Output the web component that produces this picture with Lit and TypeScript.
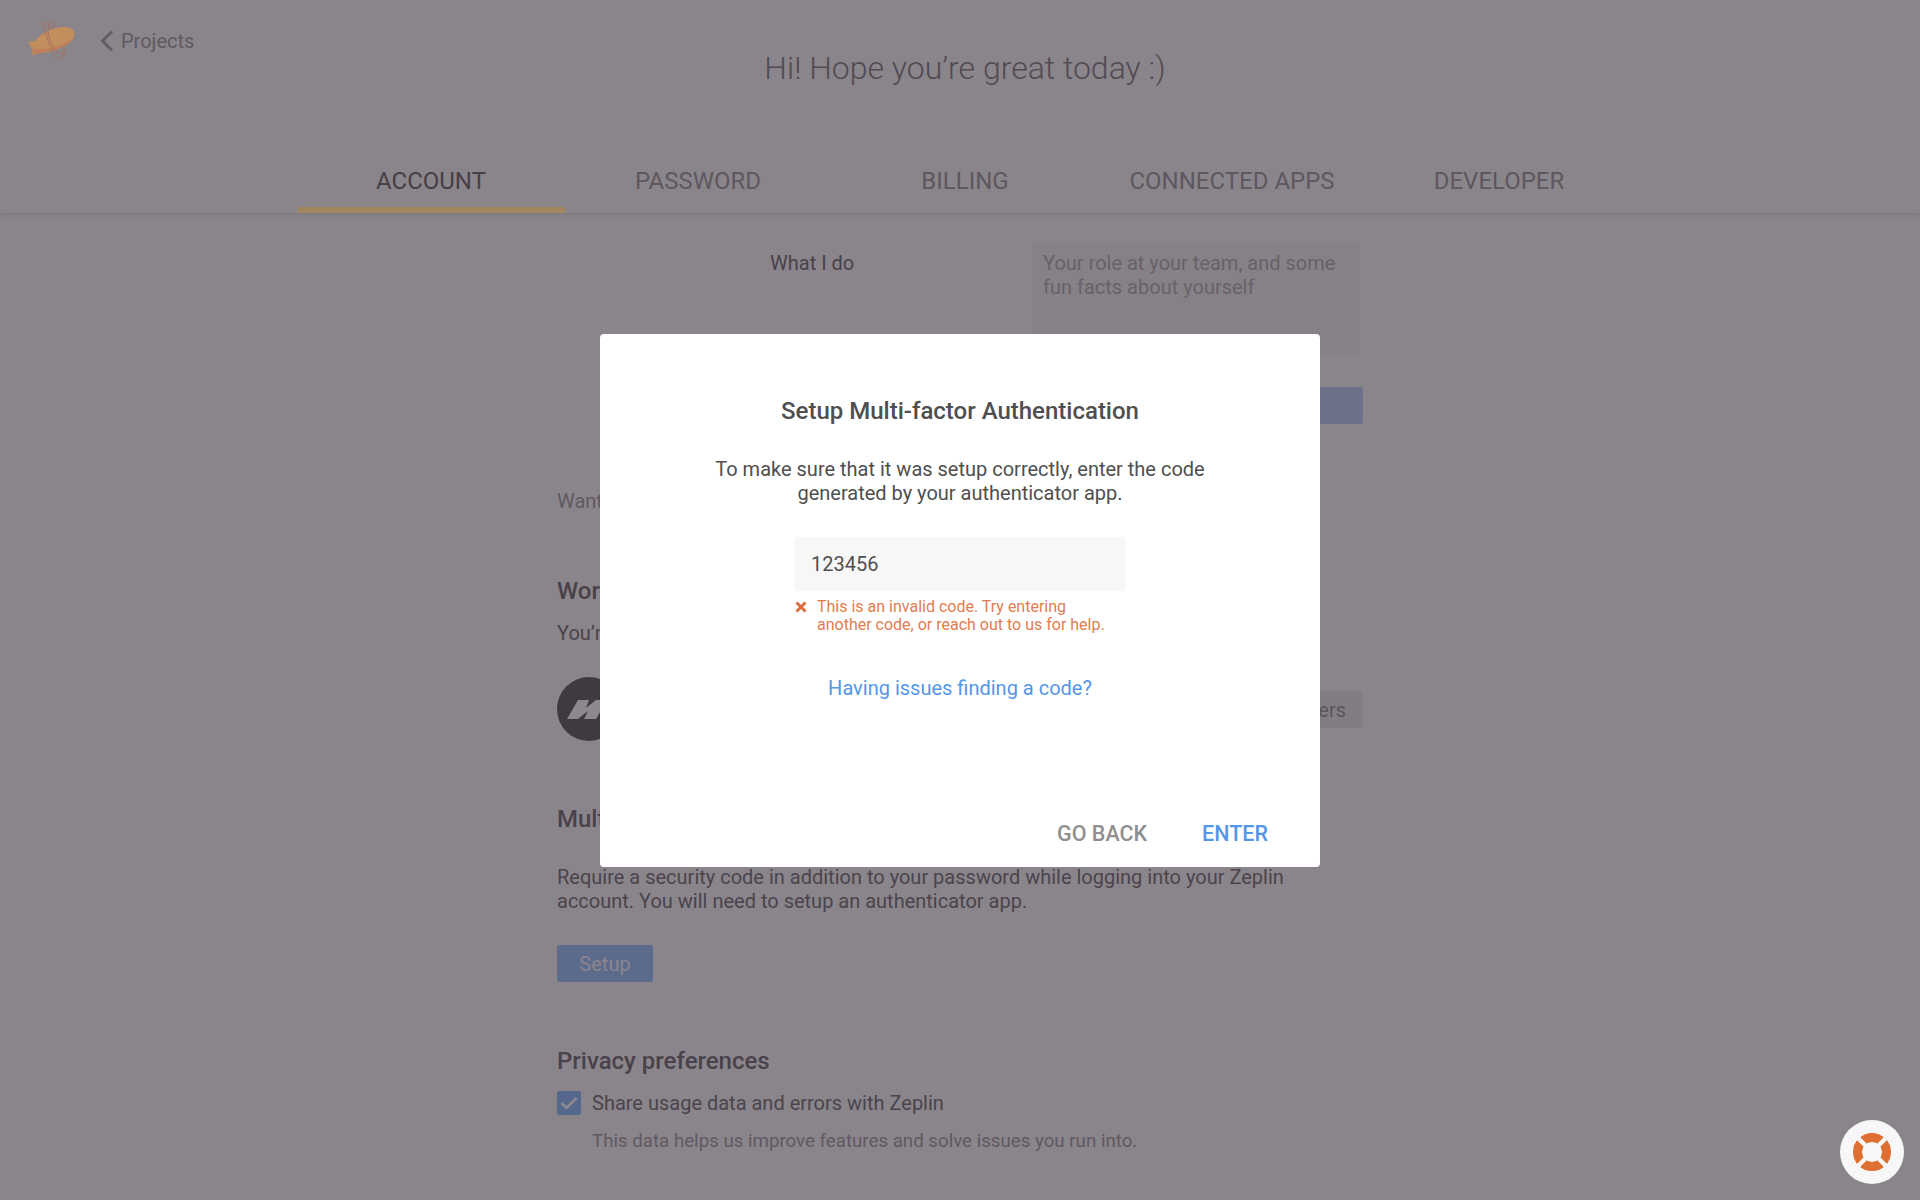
import { LitElement, html, css } from 'lit';
import { customElement } from 'lit/decorators.js';

const TABS = ['ACCOUNT', 'PASSWORD', 'BILLING', 'CONNECTED APPS', 'DEVELOPER'];

@customElement('app-root')
export class AppRoot extends LitElement {
  static styles = css`
    :host {
      display: block;
      height: 1200px;
      overflow: hidden;
      background: #f9f9f9;
      color: #7a767a;
      font-family: Roboto, 'Liberation Sans', sans-serif;
      font-size: 20px;
      line-height: 24px;
    }
    .header {
      height: 213px;
      box-shadow: 0 2px 6px rgba(0, 0, 0, 0.1);
      display: flex;
      flex-direction: column;
      justify-content: space-between;
      padding-left: 10px;
    }
    .top {
      display: grid;
      grid-template-columns: 1fr auto 1fr;
      align-items: start;
    }
    .nav {
      display: flex;
      align-items: center;
      padding: 22px 0 0 17px;
      color: #a5a1a5;
      font-size: 20px;
    }
    .logo {
      position: relative;
      z-index: 1;
      width: 49px;
      height: 40px;
      margin: -3px 24px 0 0;
    }
    .chev {
      width: 14px;
      height: 22px;
      margin-right: 7px;
    }
    .title {
      margin: 48px 0 0;
      font-size: 32px;
      font-weight: 300;
      line-height: 40px;
      color: #888488;
    }
    .tabs {
      display: flex;
      justify-content: center;
    }
    .tab {
      position: relative;
      width: 267px;
      height: 57px;
      box-sizing: border-box;
      padding-top: 12px;
      text-align: center;
      font-size: 24px;
      line-height: 26px;
      color: #a09ca0;
    }
    .tab.on {
      color: #706c70;
    }
    /* sits above the overlay, the dimmed gold can't be reached through it */
    .tab.on::after {
      content: '';
      position: absolute;
      left: 0;
      right: 0;
      bottom: 0;
      height: 6px;
      z-index: 1;
      background: #a0875f;
    }
    .main {
      width: 806px;
      margin: 0 auto;
      display: flex;
      flex-direction: column;
    }
    .what {
      display: flex;
      margin-top: 30px;
      padding-left: 213px;
    }
    .what label {
      width: 262px;
      padding-top: 8px;
      color: #767276;
    }
    .area {
      width: 328px;
      height: 112px;
      box-sizing: border-box;
      padding: 8px 11px;
      background: #f1f1f1;
      color: #b4b0b4;
    }
    .end {
      display: flex;
      justify-content: flex-end;
    }
    .btn {
      height: 37px;
      box-sizing: border-box;
      padding: 0 22px;
      border-radius: 2px;
      background: #c1d3f5;
      color: #f9f8ff;
      line-height: 38px;
      font-size: 20px;
    }
    .save {
      margin-top: 32px;
      width: 120px;
    }
    .want {
      margin-top: 65px;
      color: #a5a1a5;
    }
    h2 {
      margin: 0;
      font-size: 24px;
      font-weight: 500;
      line-height: 28px;
      color: #767276;
    }
    .work {
      margin-top: 64px;
    }
    .sub {
      margin-top: 16px;
    }
    .org {
      margin-top: 32px;
      display: flex;
      align-items: center;
      justify-content: space-between;
    }
    .avatar {
      width: 64px;
      height: 64px;
    }
    .ghost {
      background: #e9e9e9;
      color: #9c989c;
      height: 37px;
      padding: 0 17px;
    }
    .mfa {
      margin-top: 64px;
    }
    .para {
      margin: 32px 0 0;
      width: 760px;
    }
    .setup {
      margin-top: 32px;
      align-self: flex-start;
      width: 96px;
      padding: 0;
      text-align: center;
      background: #9dc3fb;
    }
    .privacy {
      margin-top: 65px;
    }
    .check {
      margin-top: 16px;
      display: flex;
      align-items: center;
      gap: 11px;
    }
    .box {
      width: 24px;
      height: 24px;
      border-radius: 2px;
      background: #8fbdfb;
      display: flex;
      align-items: center;
      justify-content: center;
    }
    .box svg {
      width: 18px;
      height: 14px;
    }
    .hint {
      margin: 14px 0 0 35px;
      font-size: 18.7px;
      color: #a5a1a5;
    }

    .overlay {
      position: fixed;
      inset: 0;
      background: rgba(27, 17, 29, 0.5);
      display: flex;
      align-items: center;
      justify-content: center;
    }
    .modal {
      width: 720px;
      height: 533px;
      box-sizing: border-box;
      padding: 63px 52px 19px;
      background: #fff;
      border-radius: 4px;
      display: flex;
      flex-direction: column;
      align-items: center;
      color: #4f4f4f;
    }
    .modal h1 {
      margin: 0;
      font-size: 24px;
      font-weight: 500;
      line-height: 28px;
    }
    .modal p {
      margin: 32px 0 0;
      text-align: center;
      font-size: 20px;
      line-height: 24px;
      width: 520px;
    }
    .field {
      width: 330px;
      margin-top: 32px;
    }
    .input {
      height: 54px;
      box-sizing: border-box;
      padding: 0 16px;
      background: #f7f7f7;
      border-radius: 2px;
      font-size: 20px;
      line-height: 54px;
    }
    .err {
      margin-top: 7px;
      display: flex;
      gap: 10px;
      color: #df7d50;
      font-size: 16px;
      line-height: 18px;
    }
    .err svg {
      width: 12px;
      height: 12px;
      margin-top: 3px;
      flex: none;
    }
    .link {
      margin-top: 42px;
      color: #5596e6;
      font-size: 20px;
      line-height: 24px;
    }
    .foot {
      margin-top: auto;
      align-self: flex-end;
      display: flex;
      gap: 55px;
      font-size: 21.5px;
      font-weight: 500;
      line-height: 28px;
      color: #8f8f8f;
    }
    .foot .go {
      color: #5596e6;
    }
    .help {
      position: fixed;
      right: 16px;
      bottom: 16px;
      width: 64px;
      height: 64px;
      border-radius: 50%;
      background: #f7f7f7;
      display: flex;
      align-items: center;
      justify-content: center;
    }
    .help svg {
      width: 40px;
      height: 40px;
    }
  `;

  render() {
    return html`
      <div class="header">
        <div class="top">
          <div class="nav">
            <svg class="logo" viewBox="0 0 49 40">
              <path d="M1 23L8 22C14 14 27 8 37 8C45 8 49 12 47 18C44 27 26 33 8 35L6 37L5 30Z" fill="#c28e5e"></path>
              <path d="M5 30L8 35C26 33 44 27 47 18C40 26 24 31 5 30Z" fill="#bd7f5a"></path>
              <path d="M16 5C18 14 22 26 27 35C29 39 33 41 35 38C37 36 38 33 37 30" fill="none" stroke="#a8705f" stroke-width="1"></path>
              <path d="M16 5C19 2 23 7 24 10M24 10C27 7 29 4 27 2C25 0 22 4 21 9C20 15 24 26 30 33C33 37 37 34 37 30" fill="none" stroke="#a8705f" stroke-width="1"></path>
            </svg>
            <svg class="chev" viewBox="0 0 14 22">
              <path d="M12 1.5L2.5 11l9.5 9.5" fill="none" stroke="#aba7ab" stroke-width="3"></path>
            </svg>
            Projects
          </div>
          <h1 class="title">Hi! Hope you’re great today :)</h1>
        </div>
        <div class="tabs">
          ${TABS.map((t, i) => html`<div class="tab ${i === 0 ? 'on' : ''}">${t}</div>`)}
        </div>
      </div>
      <div class="main">
        <div class="what">
          <label>What I do</label>
          <div class="area">Your role at your team, and some fun facts about yourself</div>
        </div>
        <div class="end"><div class="btn save"></div></div>
        <div class="want">Want to leave?</div>
        <h2 class="work">Workspaces</h2>
        <div class="sub">You’re a member</div>
        <div class="org">
          <svg class="avatar" viewBox="0 0 64 64">
            <circle cx="32" cy="32" r="32" fill="#656063"></circle>
            <path d="M10 42L21 23H32L29 31L39 23H50L39 42H27L31 34L21 42Z" fill="#fff"></path>
          </svg>
          <div class="btn ghost">Manage members</div>
        </div>
        <h2 class="mfa">Multi-factor authentication</h2>
        <p class="para">
          Require a security code in addition to your password while logging into your Zeplin account. You will need to
          setup an authenticator app.
        </p>
        <div class="btn setup">Setup</div>
        <h2 class="privacy">Privacy preferences</h2>
        <div class="check">
          <span class="box">
            <svg viewBox="0 0 18 14"><path d="M1.5 7l5 5L16.5 2" fill="none" stroke="#fff" stroke-width="2.6"></path></svg>
          </span>
          Share usage data and errors with Zeplin
        </div>
        <div class="hint">This data helps us improve features and solve issues you run into.</div>
      </div>
      <div class="overlay">
        <div class="modal">
          <h1>Setup Multi-factor Authentication</h1>
          <p>To make sure that it was setup correctly, enter the code generated by your authenticator app.</p>
          <div class="field">
            <div class="input">123456</div>
            <div class="err">
              <svg viewBox="0 0 12 12"><path d="M1.5 1.5l9 9M10.5 1.5l-9 9" stroke="#de6f3c" stroke-width="3"></path></svg>
              <span>This is an invalid code. Try entering<br />another code, or reach out to us for help.</span>
            </div>
          </div>
          <div class="link">Having issues finding a code?</div>
          <div class="foot">
            <span>GO BACK</span>
            <span class="go">ENTER</span>
          </div>
        </div>
      </div>
      <div class="help">
        <svg viewBox="0 0 40 40">
          <circle cx="20" cy="20" r="14.5" fill="none" stroke="#df6e33" stroke-width="9"></circle>
          <path d="M5 5l10 10M35 5L25 15M5 35l10-10M35 35L25 25" stroke="#f7f7f7" stroke-width="4.5"></path>
        </svg>
      </div>
    `;
  }
}
